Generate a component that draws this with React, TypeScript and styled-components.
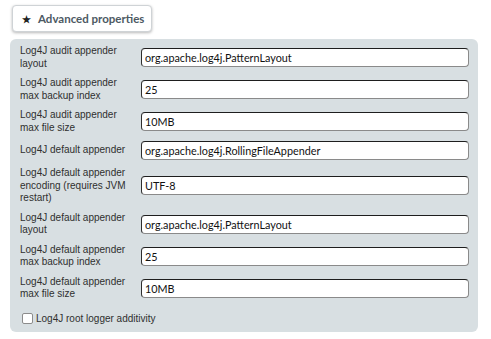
import React from 'react';
import styled, { createGlobalStyle } from 'styled-components';

const GlobalStyle = createGlobalStyle`
  body {
    margin: 0;
    background: #ffffff;
    font-family: "Liberation Sans", Arial, sans-serif;
  }
`;

const Page = styled.div`
  padding: 5px 13px 8px 10px;
  width: 468px;
`;

const SectionButton = styled.button`
  display: flex;
  align-items: center;
  gap: 7px;
  margin-left: 2px;
  width: 140px;
  height: 27px;
  padding: 0 0 0 9px;
  background: #ffffff;
  border: 1px solid #cfd3d6;
  border-radius: 4px;
  box-shadow: 0 1px 3px rgba(0, 0, 0, 0.28);
  color: #4d5963;
  font-family: "Lato", "Liberation Sans", sans-serif;
  font-size: 11.5px;
  font-weight: 700;
  cursor: pointer;
`;

const Star = styled.span`
  color: #222;
  font-size: 10px;
  line-height: 1;
`;

const Panel = styled.div`
  margin-top: 7px;
  background: #d8dfe2;
  border-radius: 6px;
  padding: 6px 9px 8px 10px;
`;

const Grid = styled.div`
  display: grid;
  grid-template-columns: 121px 1fr;
  row-gap: 7px;
  align-items: center;
`;

const Label = styled.label`
  font-size: 10px;
  line-height: 12.5px;
  color: #2f2f2f;
  padding-right: 8px;
`;

const Field = styled.input`
  box-sizing: border-box;
  width: 100%;
  height: 19px;
  padding: 0 3px;
  border: 1px solid #8a8a8a;
  border-top-color: #1e1e1e;
  border-left-color: #2e2e2e;
  border-radius: 4px;
  background: #ffffff;
  color: #111;
  font-family: "Lato", "Liberation Sans", sans-serif;
  font-size: 10.8px;
  outline: none;
`;

const CheckRow = styled.label`
  display: flex;
  align-items: center;
  gap: 3px;
  margin-top: 12px;
  padding-left: 2px;
  font-size: 10px;
  color: #2f2f2f;
`;

const Box = styled.span`
  display: inline-block;
  width: 9px;
  height: 9px;
  border: 1px solid #8c8c8c;
  border-radius: 2px;
  background: #ffffff;
`;

const rows = [
  ['Log4J audit appender layout', 'org.apache.log4j.PatternLayout'],
  ['Log4J audit appender max backup index', '25'],
  ['Log4J audit appender max file size', '10MB'],
  ['Log4J default appender', 'org.apache.log4j.RollingFileAppender'],
  ['Log4J default appender encoding (requires JVM restart)', 'UTF-8'],
  ['Log4J default appender layout', 'org.apache.log4j.PatternLayout'],
  ['Log4J default appender max backup index', '25'],
  ['Log4J default appender max file size', '10MB'],
];

const App: React.FC = () => {
  return (
    <>
      <GlobalStyle />
      <Page>
        <SectionButton>
          <Star>★</Star>
          Advanced properties
        </SectionButton>
        <Panel>
          <Grid>
            {rows.map(([label, value]) => (
              <React.Fragment key={label}>
                <Label>{label}</Label>
                <Field defaultValue={value} />
              </React.Fragment>
            ))}
          </Grid>
          <CheckRow>
            <Box />
            Log4J root logger additivity
          </CheckRow>
        </Panel>
      </Page>
    </>
  );
};

export default App;
